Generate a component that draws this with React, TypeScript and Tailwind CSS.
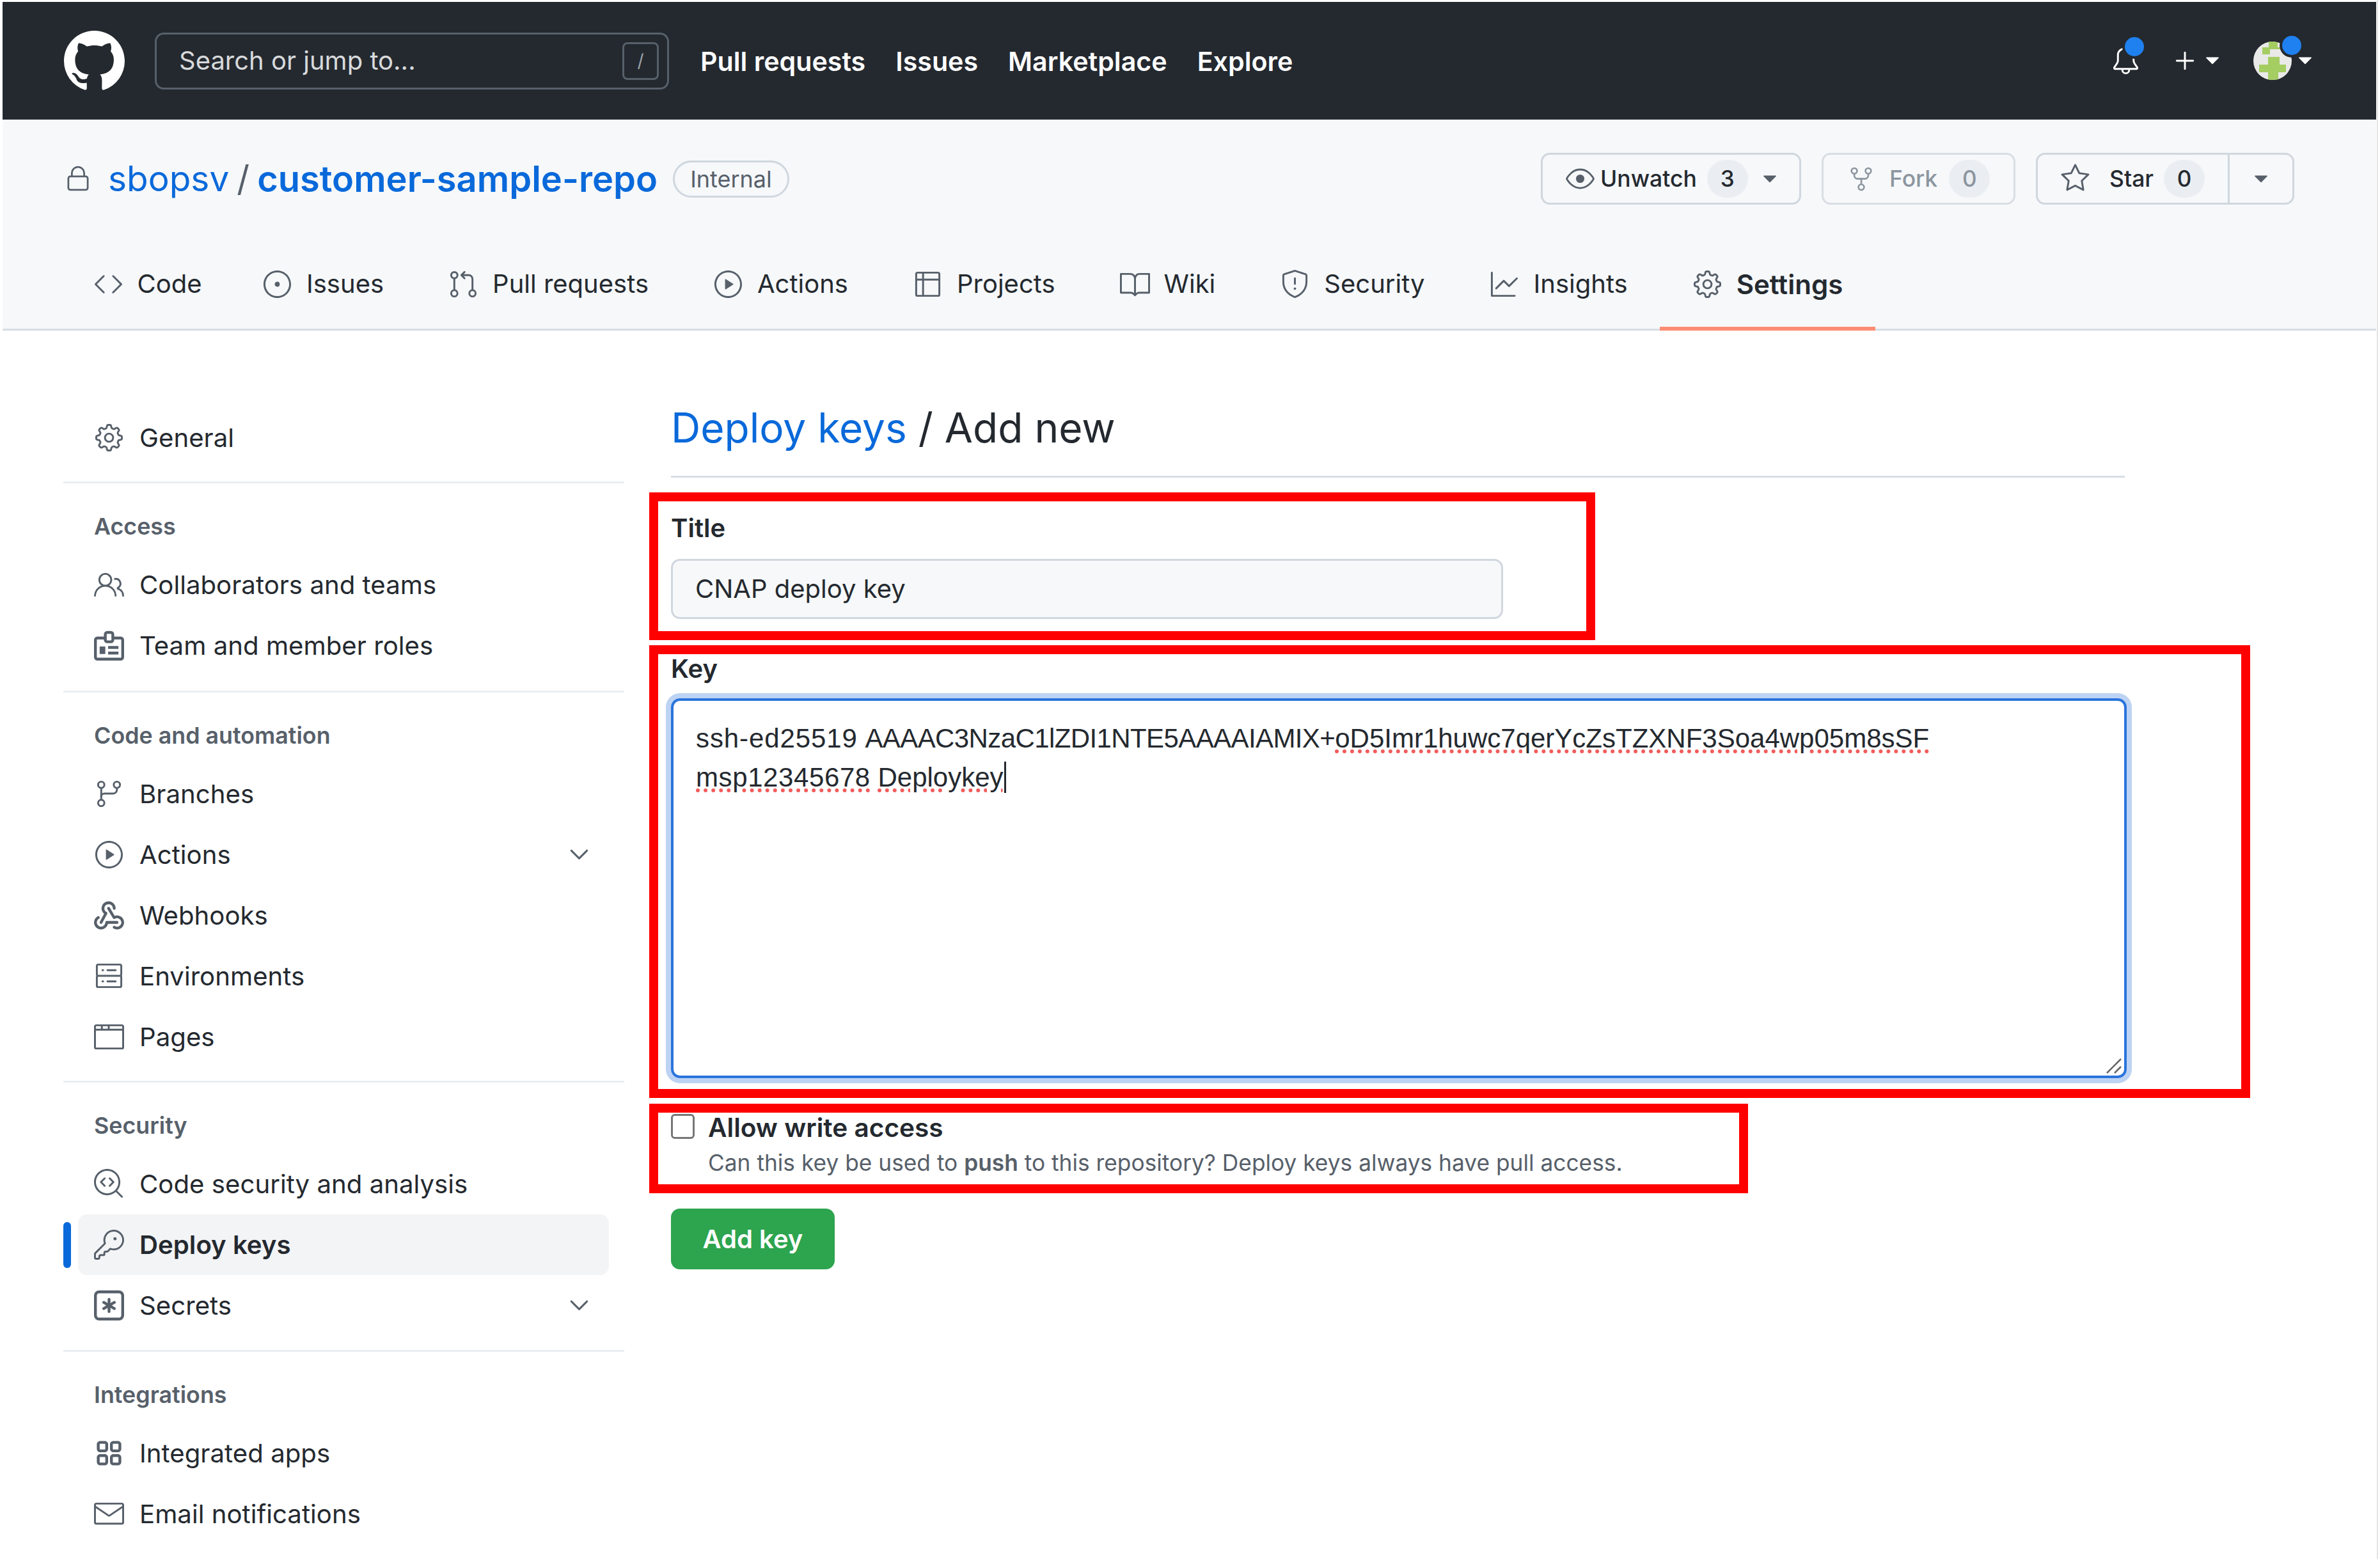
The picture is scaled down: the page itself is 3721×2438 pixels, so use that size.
import React from "react";
import {
  GoBell, GoPlus, GoTriangleDown, GoLock, GoEye, GoRepoForked, GoStar,
  GoCode, GoIssueOpened, GoGitPullRequest, GoPlay, GoTable, GoBook, GoShield, GoGraph, GoGear,
  GoPeople, GoGitBranch, GoServer, GoBrowser, GoCodescan, GoKey,
  GoChevronDown, GoMail,
} from "react-icons/go";

type Ico = React.ComponentType<{ size?: number; className?: string }>;

function Svg({ size = 47, className, children }: { size?: number; className?: string; children: React.ReactNode }) {
  return (
    <svg width={size} height={size} viewBox="0 0 16 16" fill="currentColor" className={className}>
      {children}
    </svg>
  );
}

const MarkGithub: Ico = (p) => (
  <Svg {...p}>
    <path d="M8 0c4.42 0 8 3.58 8 8a8.013 8.013 0 0 1-5.45 7.59c-.4.08-.55-.17-.55-.38 0-.27.01-1.13.01-2.2 0-.75-.25-1.23-.54-1.48 1.78-.2 3.65-.88 3.65-3.95 0-.88-.31-1.59-.82-2.15.08-.2.36-1.02-.08-2.12 0 0-.67-.22-2.2.82-.64-.18-1.32-.27-2-.27-.68 0-1.36.09-2 .27-1.53-1.03-2.2-.82-2.2-.82-.44 1.1-.16 1.92-.08 2.12-.51.56-.82 1.28-.82 2.15 0 3.06 1.86 3.75 3.64 3.95-.23.2-.44.55-.51 1.07-.46.21-1.61.55-2.33-.66-.15-.24-.6-.83-1.23-.82-.67.01-.27.38.01.53.34.19.73.9.82 1.13.16.45.68 1.31 2.69.94 0 .67.01 1.3.01 1.49 0 .21-.15.45-.55.38A7.995 7.995 0 0 1 0 8c0-4.42 3.58-8 8-8Z" />
  </Svg>
);

const Webhook: Ico = (p) => (
  <Svg {...p}>
    <path d="M5.5 4.25a2.25 2.25 0 0 1 4.5 0 .75.75 0 0 0 1.5 0 3.75 3.75 0 1 0-6.14 2.889l-2.272 4.258a.75.75 0 0 0 1.324.706L7 7.25a.75.75 0 0 0-.309-1.015A2.25 2.25 0 0 1 5.5 4.25Z" />
    <path d="M7.364 3.607a.75.75 0 0 1 1.03.257l2.608 4.349a3.75 3.75 0 1 1-.628 6.785.75.75 0 0 1 .752-1.299 2.25 2.25 0 1 0-.033-3.88.75.75 0 0 1-1.03-.256L7.107 4.636a.75.75 0 0 1 .257-1.03Z" />
    <path d="M2.9 8.776A.75.75 0 0 1 2.625 9.8 2.25 2.25 0 1 0 6 11.75a.75.75 0 0 1 .75-.751h5.5a.75.75 0 0 1 0 1.5H7.425a3.751 3.751 0 1 1-5.55-3.998.75.75 0 0 1 1.024.274Z" />
  </Svg>
);

const Apps: Ico = (p) => (
  <Svg {...p}>
    <path d="M1.5 3.25c0-.966.784-1.75 1.75-1.75h2.5c.966 0 1.75.784 1.75 1.75v2.5A1.75 1.75 0 0 1 5.75 7.5h-2.5A1.75 1.75 0 0 1 1.5 5.75Zm7 0c0-.966.784-1.75 1.75-1.75h2.5c.966 0 1.75.784 1.75 1.75v2.5a1.75 1.75 0 0 1-1.75 1.75h-2.5A1.75 1.75 0 0 1 8.5 5.75Zm-7 7c0-.966.784-1.75 1.75-1.75h2.5c.966 0 1.75.784 1.75 1.75v2.5a1.75 1.75 0 0 1-1.75 1.75h-2.5a1.75 1.75 0 0 1-1.75-1.75Zm7 0c0-.966.784-1.75 1.75-1.75h2.5c.966 0 1.75.784 1.75 1.75v2.5a1.75 1.75 0 0 1-1.75 1.75h-2.5a1.75 1.75 0 0 1-1.75-1.75ZM3.25 3a.25.25 0 0 0-.25.25v2.5c0 .138.112.25.25.25h2.5A.25.25 0 0 0 6 5.75v-2.5A.25.25 0 0 0 5.75 3Zm7 0a.25.25 0 0 0-.25.25v2.5c0 .138.112.25.25.25h2.5a.25.25 0 0 0 .25-.25v-2.5a.25.25 0 0 0-.25-.25ZM3.25 10a.25.25 0 0 0-.25.25v2.5c0 .138.112.25.25.25h2.5a.25.25 0 0 0 .25-.25v-2.5a.25.25 0 0 0-.25-.25Zm7 0a.25.25 0 0 0-.25.25v2.5c0 .138.112.25.25.25h2.5a.25.25 0 0 0 .25-.25v-2.5a.25.25 0 0 0-.25-.25Z" />
  </Svg>
);

const IdBadge: Ico = (p) => (
  <Svg {...p}>
    <path d="M6 4H1.75A1 1 0 0 0 .75 5v9.25a1 1 0 0 0 1 1h12.5a1 1 0 0 0 1-1V5a1 1 0 0 0-1-1H10" fill="none" stroke="currentColor" strokeWidth="1.5" />
    <rect x="6" y="1" width="4" height="5" rx="1" fill="none" stroke="currentColor" strokeWidth="1.5" />
    <path d="M3 8.5h3v4H3Z" />
    <path d="M7.5 9h5.5M7.5 12h5.5" fill="none" stroke="currentColor" strokeWidth="1.5" />
  </Svg>
);

const SecretIcon: Ico = (p) => (
  <Svg {...p}>
    <path d="M0 2.75A2.75 2.75 0 0 1 2.75 0h10.5A2.75 2.75 0 0 1 16 2.75v10.5A2.75 2.75 0 0 1 13.25 16H2.75A2.75 2.75 0 0 1 0 13.25ZM2.75 1.5c-.69 0-1.25.56-1.25 1.25v10.5c0 .69.56 1.25 1.25 1.25h10.5c.69 0 1.25-.56 1.25-1.25V2.75c0-.69-.56-1.25-1.25-1.25Z" />
    <path d="M8 4a.75.75 0 0 1 .75.75V6.7l1.69-.98a.75.75 0 1 1 .75 1.3L9.5 8l1.69.98a.75.75 0 1 1-.75 1.3L8.75 9.3v1.95a.75.75 0 0 1-1.5 0V9.3l-1.69.98a.75.75 0 1 1-.75-1.3L6.5 8l-1.69-.98a.75.75 0 1 1 .75-1.3l1.69.98V4.75A.75.75 0 0 1 8 4Z" />
  </Svg>
);

function Avatar() {
  return (
    <svg width="60" height="60" viewBox="0 0 60 60" className="block">
      <defs>
        <clipPath id="avatar-clip">
          <circle cx="30" cy="30" r="30" />
        </clipPath>
      </defs>
      <g clipPath="url(#avatar-clip)">
        <rect width="60" height="60" fill="#e9e9e8" />
        <path d="M24 0h14v9h12v11h10v-8H24ZM14 9h12v11H14ZM23 24h18v12h10v12H9V36h14Z" fill="#a4cd62" />
        <rect x="23" y="48" width="16" height="12" fill="#a4cd62" />
        <rect x="0" y="48" width="23" height="12" fill="#e9e9e8" />
        <rect x="39" y="48" width="21" height="12" fill="#e9e9e8" />
      </g>
    </svg>
  );
}

const tabs: { label: string; icon: Ico; active?: boolean }[] = [
  { label: "Code", icon: GoCode },
  { label: "Issues", icon: GoIssueOpened },
  { label: "Pull requests", icon: GoGitPullRequest },
  { label: "Actions", icon: GoPlay },
  { label: "Projects", icon: GoTable },
  { label: "Wiki", icon: GoBook },
  { label: "Security", icon: GoShield },
  { label: "Insights", icon: GoGraph },
  { label: "Settings", icon: GoGear, active: true },
];

function NavItem({ icon: Icon, label, chevron, active }: { icon: Ico; label: string; chevron?: boolean; active?: boolean }) {
  return (
    <div className={`relative ml-[23px] flex h-[95px] w-[830px] items-center rounded-[14px] pl-[25px] ${active ? "bg-[#f3f4f6] font-semibold" : ""}`}>
      {active && <span className="absolute left-[-23px] top-[12px] h-[72px] w-[12px] rounded-[6px] bg-[#0969da]" />}
      <span className="flex w-[47px] shrink-0 text-[#57606a]">
        <Icon size={47} />
      </span>
      <span className="ml-[24px] text-[40.2px] leading-[46px] text-[#24292f]">{label}</span>
      {chevron && (
        <span className="ml-auto mr-[23px] flex text-[#57606a]">
          <GoChevronDown size={47} />
        </span>
      )}
    </div>
  );
}

function SideHead({ children }: { children: React.ReactNode }) {
  return <div className="mb-[21px] ml-[48px] mt-[44px] h-[46px] text-[35.8px] font-semibold leading-[46px] text-[#57606a]">{children}</div>;
}

function Rule({ className }: { className: string }) {
  return <div className={`h-[3px] w-[877px] bg-[#eaeef2] ${className}`} />;
}

function Counter({ n, muted }: { n: string; muted?: boolean }) {
  return (
    <span className={`flex h-[59px] w-[64px] items-center justify-center rounded-full bg-[#eaeef2] text-[35px] ${muted ? "text-[#8c959f]" : "text-[#24292f]"}`}>
      {n}
    </span>
  );
}

const err = "underline decoration-dotted decoration-[#f25c5c] decoration-[6px] underline-offset-[3px]";

function RedBox({ className }: { className: string }) {
  return <div className={`absolute border-[14px] border-[#ff0000] ${className}`} />;
}

export default function App() {
  return (
    <div className="relative h-[2438px] w-[3721px] overflow-hidden bg-white pl-[4px] pr-[6px] pt-[3px] text-[#24292f] [font-family:Inter,sans-serif]">
      <div className="absolute right-[3px] top-0 h-full w-[2px] bg-[#e3e3e3]" />

      <header className="flex h-[184px] items-center bg-[#24292f] pl-[96px] text-white">
        <MarkGithub size={95} className="shrink-0" />
        <div className="ml-[47px] flex h-[89px] w-[804px] items-center rounded-[14px] border-[3px] border-[#57606a] pl-[35px] pr-[13px]">
          <span className="text-[40px] text-[#d8dadc]">Search or jump to...</span>
          <span className="ml-auto flex h-[59px] w-[57px] items-center justify-center rounded-[8px] border-[3px] border-[#57606a] text-[28px] text-[#9ca3a9]">/</span>
        </div>
        <nav className="ml-[49px] mt-[4px] flex gap-[47px] text-[41.2px] font-semibold">
          <span>Pull requests</span>
          <span>Issues</span>
          <span>Marketplace</span>
          <span>Explore</span>
        </nav>
        <div className="ml-auto flex items-center pr-[92px]">
          <span className="relative flex">
            <GoBell size={47} />
            <span className="absolute left-[22px] top-[-14px] h-[30px] w-[30px] rounded-full bg-[#1f80f0] shadow-[0_0_0_4px_#24292f]" />
          </span>
          <span className="ml-[46px] flex">
            <GoPlus size={47} />
          </span>
          <span className="flex">
            <GoTriangleDown size={38} />
          </span>
          <span className="relative ml-[45px] h-[60px] w-[60px]">
            <Avatar />
            <span className="absolute left-[45px] top-[-9px] h-[30px] w-[30px] rounded-full bg-[#1f80f0] shadow-[0_0_0_4px_#24292f]" />
          </span>
          <span className="ml-[2px] flex">
            <GoTriangleDown size={38} />
          </span>
        </div>
      </header>

      <section className="h-[330px] border-b-[3px] border-[#d8dee4] bg-[#f6f8fa]">
        <div className="flex h-[132px] items-end pl-[96px]">
          <div className="mb-[-1px] flex h-[81px] flex-1 items-center">
            <GoLock size={44} className="text-[#57606a]" />
            <span className="ml-[25px] text-[55px] text-[#0969da]">sbopsv</span>
            <span className="mx-[12px] text-[55px] text-[#57606a]">/</span>
            <span className="text-[56px] font-semibold text-[#0969da]">customer-sample-repo</span>
            <span className="ml-[24px] flex h-[58px] items-center rounded-full border-[3px] border-[#d0d7de] px-[24px] text-[36px] text-[#57606a]">Internal</span>
          </div>
          <div className="mb-[-1px] flex h-[81px] pr-[128px] text-[35.5px] font-medium">
            <div className="flex w-[407px] items-center rounded-[14px] border-[3px] border-[#d0d7de] pl-[36px]">
              <GoEye size={45} className="text-[#57606a]" />
              <span className="ml-[9px]">Unwatch</span>
              <span className="ml-[16px]"><Counter n="3" /></span>
              <GoTriangleDown size={38} className="ml-[15px] text-[#57606a]" />
            </div>
            <div className="ml-[32px] flex w-[303px] items-center rounded-[14px] border-[3px] border-[#d8dee4] pl-[38px] text-[#8c959f]">
              <GoRepoForked size={42} />
              <span className="ml-[23px]">Fork</span>
              <span className="ml-[18px]"><Counter n="0" muted /></span>
            </div>
            <div className="ml-[32px] flex w-[404px] items-center rounded-[14px] border-[3px] border-[#d0d7de] pl-[35px]">
              <GoStar size={47} className="text-[#57606a]" />
              <span className="ml-[30px]">Star</span>
              <span className="ml-[16px]"><Counter n="0" /></span>
              <span className="ml-[36px] flex h-full flex-1 items-center justify-center border-l-[3px] border-[#d0d7de]">
                <GoTriangleDown size={38} className="text-[#57606a]" />
              </span>
            </div>
          </div>
        </div>
        <nav className="mt-[55px] flex h-[143px] pl-[91px]">
          {tabs.map((t, i) => (
            <div key={t.label} className={`flex h-[143px] items-center border-b-[6px] pl-[50.5px] pt-[3px] ${i === 0 ? "pr-[44px]" : "pr-[50.5px]"} ${t.active ? "border-[#fd8c73] font-semibold" : "border-transparent"}`}>
              <span className="text-[#57606a]"><t.icon size={47} /></span>
              <span className={`ml-[22px] ${t.active ? "text-[42px]" : "text-[40px]"}`}>{t.label}</span>
            </div>
          ))}
        </nav>
      </section>

      <main className="ml-[95px] flex">
        <aside className="w-[877px] pt-[120px]">
          <NavItem icon={GoGear} label="General" />
          <Rule className="mt-[21px]" />
          <SideHead>Access</SideHead>
          <NavItem icon={GoPeople} label="Collaborators and teams" />
          <NavItem icon={IdBadge} label="Team and member roles" />
          <Rule className="mt-[23px]" />
          <SideHead>Code and automation</SideHead>
          <NavItem icon={GoGitBranch} label="Branches" />
          <NavItem icon={GoPlay} label="Actions" chevron />
          <NavItem icon={Webhook} label="Webhooks" />
          <NavItem icon={GoServer} label="Environments" />
          <NavItem icon={GoBrowser} label="Pages" />
          <Rule className="mt-[21px]" />
          <SideHead>Security</SideHead>
          <NavItem icon={GoCodescan} label="Code security and analysis" />
          <NavItem icon={GoKey} label="Deploy keys" active />
          <NavItem icon={SecretIcon} label="Secrets" chevron />
          <Rule className="mt-[22px]" />
          <SideHead>Integrations</SideHead>
          <NavItem icon={Apps} label="Integrated apps" />
          <NavItem icon={GoMail} label="Email notifications" />
        </aside>

        <div className="ml-[73px] w-[2273px] pt-[114px]">
          <h2 className="border-b-[3px] border-[#d8dee4] pb-[37px] text-[64px] font-normal leading-[76px]">
            <span className="text-[#0969da]">Deploy keys</span> / Add new
          </h2>
          <label className="mt-[56px] block text-[40px] font-semibold leading-[46px]">Title</label>
          <div className="mt-[25px] flex h-[94px] w-[1301px] items-center rounded-[14px] border-[3px] border-[#d0d7de] bg-[#f6f8fa] pl-[35px] text-[40px]">CNAP deploy key</div>
          <label className="mt-[55px] block text-[40px] font-semibold leading-[46px]">Key</label>
          <div className="relative mt-[23px] h-[594px] w-[2276px] rounded-[14px] border-[4px] border-[#2a74dc] pl-[35px] pt-[28px] text-[42px] leading-[61px] shadow-[0_0_0_8px_#bdd3f3] [font-family:'Liberation_Sans',sans-serif]">
            <div className="whitespace-nowrap">
              <span className="tracking-[0.9px]">ssh-ed25519</span> <span className="tracking-[-0.6px]">AAAAC3NzaC1lZDI1NTE5AAAAIAMIX+</span><span className={err}>oD5Imr1huwc7qerYcZsTZXNF3Soa4wp05m8sSF</span>
            </div>
            <div className="whitespace-pre">
              <span className={`${err} tracking-[0.6px]`}>msp12345678</span> <span className={err}>Deploykey</span>
              <span className="relative ml-[1px] inline-block h-[1px] w-[3px]">
                <span className="absolute left-0 top-[-38px] h-[49px] w-[3px] bg-[#24292f]" />
              </span>
            </div>
            <svg className="absolute bottom-[2px] right-[3px]" width="26" height="26" viewBox="0 0 26 26" stroke="#666" strokeWidth="2.5">
              <path d="M2 24 24 2M14 24 24 14" />
            </svg>
          </div>
          <div className="mt-[55px] flex">
            <span className="mt-[1px] h-[39px] w-[37px] shrink-0 rounded-[6px] border-[3px] border-[#767676] bg-white" />
            <div className="ml-[21px]">
              <div className="text-[40.6px] font-semibold leading-[46px]">Allow write access</div>
              <div className="mt-[12px] text-[35.3px] leading-[40px] text-[#57606a]">
                Can this key be used to <b className="font-semibold">push</b> to this repository? Deploy keys always have pull access.
              </div>
            </div>
          </div>
          <div className="mt-[51px] flex h-[95px] w-[256px] items-center justify-center rounded-[14px] bg-[#2da44e] text-[40px] font-semibold text-white">Add key</div>
        </div>
      </main>

      <RedBox className="left-[1015px] top-[770px] h-[231px] w-[1479px]" />
      <RedBox className="left-[1015px] top-[1009px] h-[708px] w-[2503px]" />
      <RedBox className="left-[1015px] top-[1726px] h-[140px] w-[1718px]" />
    </div>
  );
}
